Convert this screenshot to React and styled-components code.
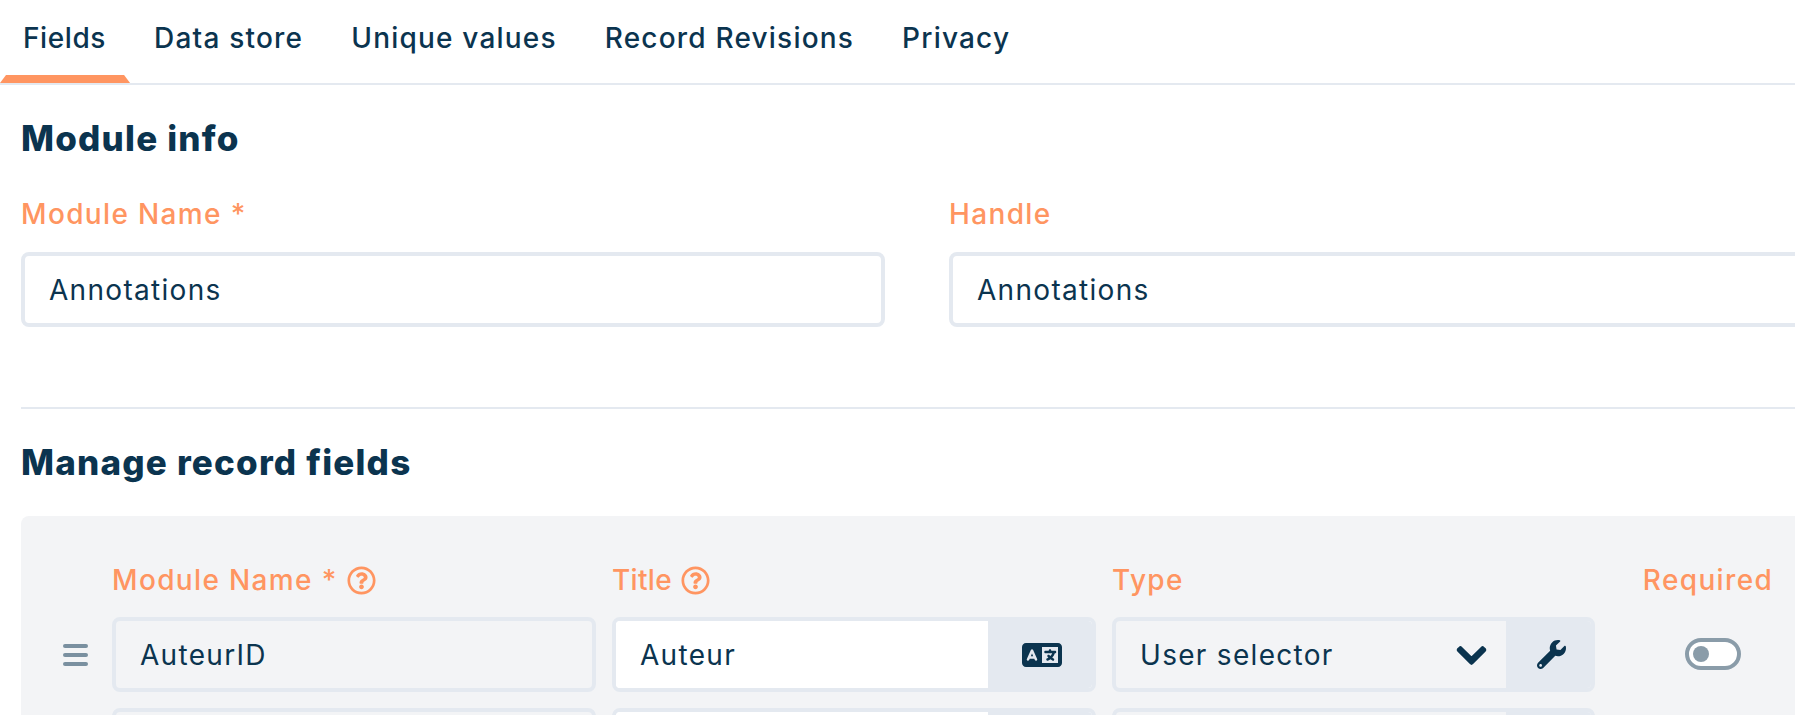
import styled, { createGlobalStyle } from "styled-components";
import { FaChevronDown, FaRegQuestionCircle, FaWrench } from "react-icons/fa";
import { FaLanguage } from "react-icons/fa6";

const navy = "#0b344f";
const orange = "#ff9561";
const line = "#e4e9f0";

const GlobalStyle = createGlobalStyle`
  html, body {
    margin: 0;
    padding: 0;
    height: 100%;
    overflow: hidden;
    background: #fff;
  }
  * {
    box-sizing: border-box;
  }
  #root {
    font-family: Inter, "Liberation Sans", sans-serif;
    color: ${navy};
  }
`;

const Page = styled.div`
  width: 1880px;
  height: 715px;
  overflow: hidden;
`;

const TabBar = styled.nav`
  display: flex;
  height: 85px;
  border-bottom: 2px solid ${line};
`;

const Tab = styled.div`
  position: relative;
  display: flex;
  align-items: center;
  height: 76px;
  padding: 0 24px;
  font-size: 28px;
  font-weight: 500;
  letter-spacing: ${(p) => (p.$active ? "0.6px" : "1.2px")};
  ${(p) =>
    p.$active &&
    `
    padding-left: 23px;
    &::after {
      content: "";
      position: absolute;
      left: 0;
      right: 0;
      top: 75px;
      height: 8px;
      background: ${orange};
      clip-path: polygon(6px 0, calc(100% - 6px) 0, 100% 100%, 0 100%);
    }
  `}
`;

const Heading = styled.h2`
  margin: ${(p) => p.$top || 0}px 0 0;
  font-size: 35px;
  line-height: 50px;
  font-weight: 800;
  letter-spacing: 1.2px;
  padding-left: 21px;
`;

const InfoGrid = styled.div`
  display: grid;
  grid-template-columns: 864px 864px;
  column-gap: 64px;
  margin: 33px 0 0 21px;
`;

const Label = styled.div`
  display: flex;
  align-items: center;
  gap: 9px;
  height: 36px;
  font-size: 28px;
  font-weight: 500;
  letter-spacing: ${(p) => p.$spacing || 1.35}px;
  color: ${orange};
  justify-content: ${(p) => (p.$center ? "center" : "flex-start")};
`;

const InfoField = styled.div`
  display: flex;
  flex-direction: column;
  gap: 20px;
`;

const FieldBox = styled.div`
  display: flex;
  height: 75px;
  border: 4px solid ${line};
  border-radius: 8px;
  overflow: hidden;
  background: ${(p) => (p.$white ? "#fff" : "transparent")};
`;

const FieldText = styled.div`
  flex: 1;
  display: flex;
  align-items: center;
  justify-content: space-between;
  padding: 0 24px;
  font-size: 28px;
  letter-spacing: 1.3px;
  background: ${(p) => (p.$white ? "#fff" : "transparent")};
`;

const Chevron = styled(FaChevronDown)`
  margin: 2px -6px 0 0;
  stroke: ${navy};
  stroke-width: 22px;
`;

const Addon = styled.div`
  display: flex;
  align-items: center;
  justify-content: center;
  width: ${(p) => p.$width}px;
  padding-left: ${(p) => p.$shift || 0}px;
  background: ${line};
`;

const Divider = styled.hr`
  height: 2px;
  border: 0;
  margin: 80px 0 28px 21px;
  background: ${line};
`;

const Panel = styled.section`
  margin: 29px 0 0 21px;
  padding: 46px 0 0 36px;
  height: 300px;
  background: #f3f4f6;
  border-radius: 8px 0 0 0;
`;

const Rows = styled.div`
  display: grid;
  grid-template-columns: 39px 484px 484px 483px 202px;
  column-gap: 16px;
  row-gap: 16px;
`;

const HeaderCell = styled.div`
  margin-bottom: 3px;
`;

const RequiredCell = styled(HeaderCell)`
  padding-right: 8px;
`;

const Handle = styled.div`
  display: flex;
  flex-direction: column;
  justify-content: center;
  gap: 5px;
  width: 25px;
  margin-left: 6px;
  span {
    display: block;
    height: 4px;
    border-radius: 2px;
    background: #7a90a0;
  }
`;

const ToggleCell = styled.div`
  display: flex;
  align-items: center;
  justify-content: center;
`;

const Toggle = styled.div`
  display: flex;
  align-items: center;
  width: 56px;
  height: 32px;
  padding-left: 4px;
  margin: 0 0 1px 2px;
  border: 4px solid #8a9ca9;
  border-radius: 16px;
  background: #fff;
  &::before {
    content: "";
    width: 16px;
    height: 16px;
    border-radius: 50%;
    background: #8a9ca9;
  }
`;

const Row = ({ name, title, type }) => (
  <>
    <Handle>
      <span />
      <span />
      <span />
    </Handle>
    <FieldBox>
      <FieldText>{name}</FieldText>
    </FieldBox>
    <FieldBox $white>
      <FieldText $white>{title}</FieldText>
      <Addon $width={104} $shift={4}>
        <FaLanguage size={40} color={navy} />
      </Addon>
    </FieldBox>
    <FieldBox>
      <FieldText>
        {type}
        <Chevron size={33} color={navy} />
      </FieldText>
      <Addon $width={85} $shift={5}>
        <FaWrench size={29} color={navy} />
      </Addon>
    </FieldBox>
    <ToggleCell>
      <Toggle />
    </ToggleCell>
  </>
);

const App = () => {
  return (
    <Page>
      <GlobalStyle />
      <TabBar>
        <Tab $active>Fields</Tab>
        <Tab>Data store</Tab>
        <Tab>Unique values</Tab>
        <Tab>Record Revisions</Tab>
        <Tab>Privacy</Tab>
      </TabBar>

      <Heading $top={28}>Module info</Heading>
      <InfoGrid>
        <InfoField>
          <Label>Module Name *</Label>
          <FieldBox>
            <FieldText>Annotations</FieldText>
          </FieldBox>
        </InfoField>
        <InfoField>
          <Label>Handle</Label>
          <FieldBox>
            <FieldText>Annotations</FieldText>
          </FieldBox>
        </InfoField>
      </InfoGrid>

      <Divider />
      <Heading>Manage record fields</Heading>

      <Panel>
        <Rows>
          <span />
          <HeaderCell>
            <Label>
              Module Name * <FaRegQuestionCircle size={29} />
            </Label>
          </HeaderCell>
          <HeaderCell>
            <Label $spacing={0.3}>
              Title <FaRegQuestionCircle size={29} />
            </Label>
          </HeaderCell>
          <HeaderCell>
            <Label>Type</Label>
          </HeaderCell>
          <RequiredCell>
            <Label $center>Required</Label>
          </RequiredCell>
          <Row name="AuteurID" title="Auteur" type="User selector" />
          <Row />
        </Rows>
      </Panel>
    </Page>
  );
};

export default App;
